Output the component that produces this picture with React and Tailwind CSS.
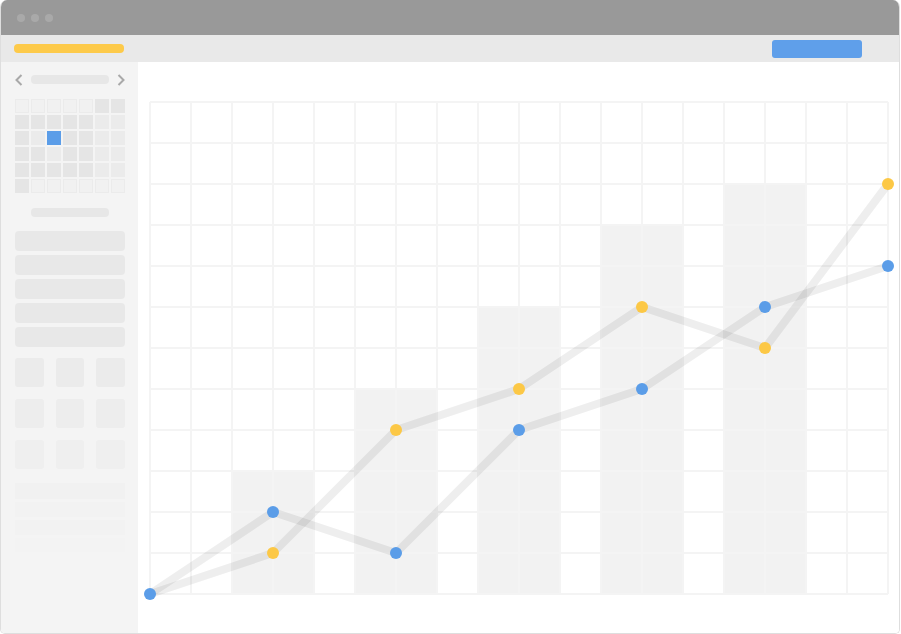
const CELLS = [
  "ooooodd",
  "dddddll",
  "dlbddll",
  "ddlddll",
  "dddddll",
  "doooooo",
];

const cellClass = {
  o: "bg-[#f1f1f1] border border-[#ebebeb]",
  d: "bg-[#e5e5e5]",
  l: "bg-[#ebebeb]",
  b: "bg-[#5b9de8]",
};

const BARS = [
  { x: 232, top: 471 },
  { x: 355, top: 389 },
  { x: 478, top: 307 },
  { x: 601, top: 225 },
  { x: 724, top: 184 },
];

const BLUE = [
  [150, 594], [273, 512], [396, 553], [519, 430], [642, 389], [765, 307], [888, 266],
];
const YELLOW = [
  [150, 594], [273, 553], [396, 430], [519, 389], [642, 307], [765, 348], [888, 184],
];

const Chevron = ({ dir }) => (
  <svg width="8" height="12" viewBox="0 0 8 12" fill="none">
    <path
      d={dir === "left" ? "M6.5 1 L1.5 6 L6.5 11" : "M1.5 1 L6.5 6 L1.5 11"}
      stroke="#a9a9a9"
      strokeWidth="2"
    />
  </svg>
);

const Sidebar = () => (
  <div className="w-[137px] shrink-0 bg-[#f4f4f4] pl-[14px] pr-[13px] pt-[12px]">
    <div className="flex items-center justify-between h-[11px]">
      <Chevron dir="left" />
      <div className="w-[78px] h-[9px] rounded-sm bg-[#e7e7e7]" />
      <Chevron dir="right" />
    </div>

    <div className="mt-[14px] grid grid-cols-7 gap-[2px]">
      {CELLS.join("").split("").map((c, i) => (
        <div key={i} className={`h-[14px] ${cellClass[c]}`} />
      ))}
    </div>

    <div className="mt-[15px] mx-auto w-[78px] h-[9px] rounded-sm bg-[#e7e7e7]" />

    <div className="mt-[14px] flex flex-col gap-[4px]">
      {[0, 1, 2, 3, 4].map((i) => (
        <div key={i} className="h-[20px] rounded-sm bg-[#e8e8e8]" />
      ))}
    </div>

    <div className="mt-[11px] grid grid-cols-3 gap-x-[12px] gap-y-[12px]">
      {[0, 1, 2, 3, 4, 5, 6, 7, 8].map((i) => (
        <div
          key={i}
          className={`h-[29px] rounded-[3px] ${i < 3 ? "bg-[#ebebeb]" : i < 6 ? "bg-[#ededed]" : "bg-[#efefef]"}`}
        />
      ))}
    </div>

    <div className="mt-[14px] flex flex-col gap-[3px]">
      <div className="h-[16px] bg-[#f1f1f1]" />
      <div className="h-[15px] bg-[#f2f2f2]" />
      <div className="h-[15px] bg-[#f2f2f2]" />
      <div className="h-[14px] bg-[#f3f3f3]" />
    </div>
  </div>
);

const Chart = () => {
  const cols = Array.from({ length: 19 }, (_, i) => 150 + 41 * i);
  const rows = Array.from({ length: 13 }, (_, i) => 102 + 41 * i);
  const pts = (arr) => arr.map((p) => p.join(",")).join(" ");
  return (
    <svg width="761" height="571" viewBox="138 62 761 571" className="block">
      {BARS.map((b) => (
        <rect key={b.x} x={b.x} y={b.top} width="82" height={594 - b.top} fill="#f2f2f2" />
      ))}
      {cols.map((x) => (
        <line key={"c" + x} x1={x} y1="102" x2={x} y2="594" stroke="#f4f4f4" strokeWidth="2" />
      ))}
      {rows.map((y) => (
        <line key={"r" + y} x1="150" y1={y} x2="888" y2={y} stroke="#f4f4f4" strokeWidth="2" />
      ))}
      <polyline points={pts(BLUE)} fill="none" stroke="#000" strokeOpacity="0.065" strokeWidth="8" strokeLinejoin="round" />
      <polyline points={pts(YELLOW)} fill="none" stroke="#000" strokeOpacity="0.065" strokeWidth="8" strokeLinejoin="round" />
      {YELLOW.slice(1).map(([x, y]) => (
        <circle key={"y" + x} cx={x} cy={y} r="6" fill="#fcc846" />
      ))}
      {BLUE.map(([x, y]) => (
        <circle key={"b" + x} cx={x} cy={y} r="6" fill="#5b9de8" />
      ))}
    </svg>
  );
};

const App = () => {
  return (
    <div className="w-[901px] h-[634px] bg-white">
      <div className="w-[900px] h-[634px] flex flex-col overflow-hidden rounded-t-[7px] rounded-b-[5px] border-x border-b border-[#dedede]">
        <div className="h-[35px] shrink-0 bg-[#999999] flex items-center gap-[6px] pl-[16px]">
          <span className="w-[8px] h-[8px] rounded-full bg-[#a9a9a9]" />
          <span className="w-[8px] h-[8px] rounded-full bg-[#a9a9a9]" />
          <span className="w-[8px] h-[8px] rounded-full bg-[#a9a9a9]" />
        </div>
        <div className="h-[27px] shrink-0 bg-[#e9e9e9] flex items-center justify-between pl-[13px] pr-[37px]">
          <div className="w-[110px] h-[9px] rounded-sm bg-[#fdca4a]" />
          <div className="w-[90px] h-[18px] rounded-[3px] bg-[#5f9fea]" />
        </div>
        <div className="flex-1 flex min-h-0">
          <Sidebar />
          <div className="flex-1 bg-white">
            <Chart />
          </div>
        </div>
      </div>
    </div>
  );
};

export default App;
